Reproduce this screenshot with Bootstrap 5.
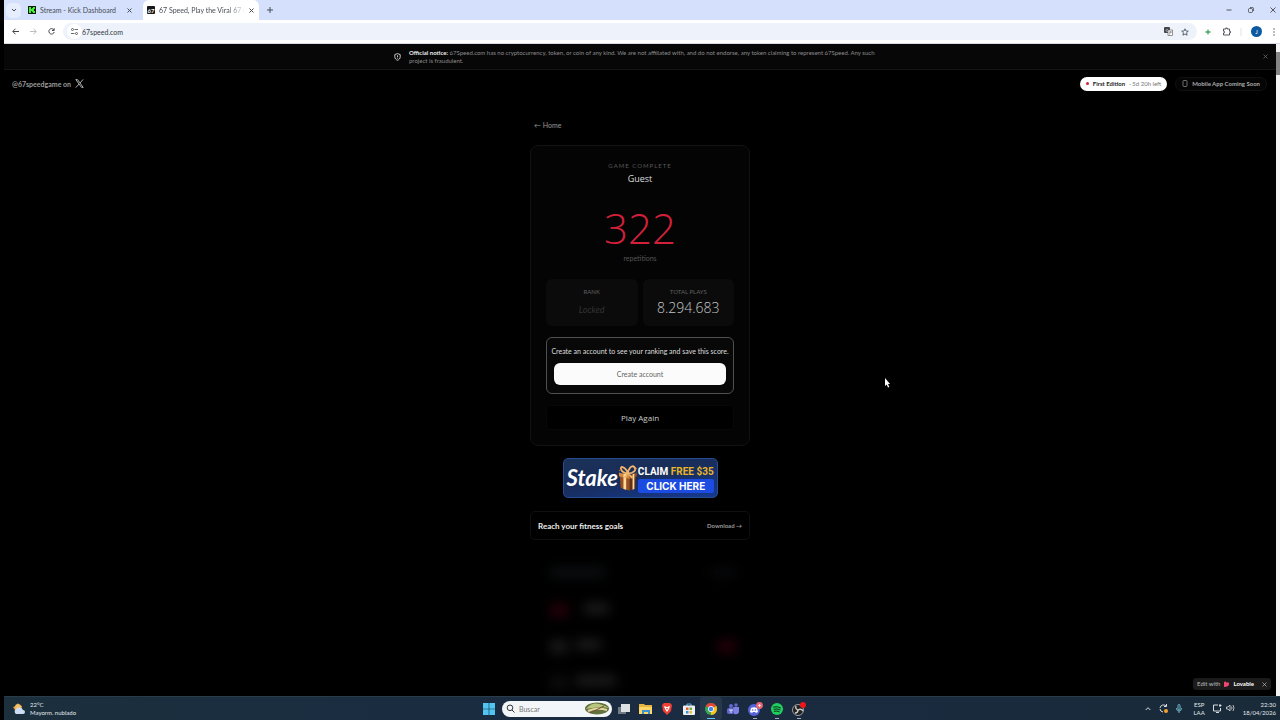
<!DOCTYPE html>
<html lang="es">
<head>
<meta charset="utf-8">
<meta name="viewport" content="width=device-width, initial-scale=1">
<title>67 Speed, Play the Viral 67 Game</title>
<link href="https://cdn.jsdelivr.net/npm/bootstrap@5.3.0/dist/css/bootstrap.min.css" rel="stylesheet">
<style>
body{font-family:Lato,"Open Sans",sans-serif;font-size:8px;line-height:12px;background:#000;color:#ddd}
svg{display:block;flex:none}
button,input{font:inherit}
button.plain{background:none;border:0;padding:0;color:inherit}
a{color:inherit;text-decoration:none}
.screen{height:100vh;padding-left:4px}
.tabstrip{height:20px;background:#d5e1fc;color:#474c55;font-size:7px;padding-left:2px}
.tabsearch{width:15px;height:15px;border-radius:5px;background:#e6eefd!important}
.tab-item{width:116px;height:20px;padding:0 5px 0 7px}
.tab-open{background:#fff;border-radius:6px 6px 0 0;padding:0 5px 0 4px;margin-left:6px}
.tab-label{overflow:hidden;white-space:nowrap}
.tab-fade{-webkit-mask-image:linear-gradient(90deg,#000 80%,transparent)}
.toolbar{height:24px;background:#fff;color:#41464d;border-bottom:1px solid #d8dbe0}
.navbuttons{gap:11px}
.omni{height:17px;border-radius:9px;background:#edf2fb}
.omni input{border:0;background:none;outline:0;padding:0;color:#35393f;font-size:7px;height:14px;min-width:0}
.siteinfo{width:15px;height:15px;border-radius:50%;background:#fff!important}
.avatar{width:11px;height:11px;border-radius:50%;background:#0c5aa0!important;color:#fff!important;font-size:6px}
.notice{height:26px;background:#070707;border-bottom:1px solid #151515;font-size:6px;line-height:8px;color:#8c8c8c}
.notice p{width:472px}
.notice b{color:#eee}
.viewport-area{overflow:hidden;min-height:0}
.track{width:4px;background:#f3f3f3}
.thumb{height:23px;margin-top:8px;background:#868686}
.topline{height:27px;padding:0 9px 0 8px;font-size:7px;color:#9a9a9a;font-weight:700}
.edition{height:14px;border-radius:7px;background:#fff!important;color:#222!important;font-size:6px;padding:0 6px!important;font-weight:700}
.edition span{color:#777;font-weight:400}
.dot{width:3px;height:3px;border-radius:50%;background:#d3203a}
.soon{height:14px;border-radius:7px;border:1px solid #111;background:#050505;color:#aaa;font-size:6px;font-weight:700;padding:0 6px}
.column-main{width:220px}
.homelink{font-size:7px;color:#999;padding:22px 4px 14px;line-height:12px}
.panel{border:1px solid #121212;border-radius:8px;background:#040404;padding:14px 15px 15px;height:301px}
.eyebrow{font-size:6px;line-height:12px;letter-spacing:1px;color:#595959}
.who{font:400 9px/14px "Open Sans",sans-serif;color:#ddd}
.score{font:300 42px/50px "Open Sans",sans-serif;color:#d2203a;margin-top:17px}
.unit{font-size:7px;line-height:10px;color:#555}
.stats{gap:5px;margin-top:16px}
.stat{height:47px;flex:1 1 0;border-radius:6px;background:#0b0b0b;padding-top:7px}
.stat h3{font-size:6px;line-height:12px;color:#606060;margin:0;font-weight:400}
.locked{font-size:9px;line-height:24px;color:#333;font-style:italic}
.total{font:300 14px/20px "Open Sans",sans-serif;color:#c4c4c4}
.signup{border:1px solid #505050;border-radius:6px;height:57px;margin-top:11px;padding:6px 4px;background:#080808;font-size:7px;line-height:14px;white-space:nowrap}
.signup .prompt{margin-bottom:5px}
.signup .button-row{padding:0 3px}
.create{height:22px;border-radius:6px;background:#fbfbfb!important;color:#666!important;width:100%}
.again{height:25px;width:100%;margin-top:11px;background:#000!important;border:1px solid #080808!important;border-radius:4px;color:#ccc!important;font-family:"Open Sans",sans-serif}
.promo{width:155px;height:40px;margin:12px auto 13px;border-radius:5px;border:1px solid #244c8f;background:linear-gradient(170deg,#1b3257,#182d5b 45%,#153992);color:#fff;padding:0 3px}
.promo .brandword{font:italic 700 22px/34px Lato,"Open Sans",sans-serif;width:53px}
.claim{font:700 10px/15px Roboto,sans-serif;white-space:nowrap}
.claim em{font-style:normal;color:#e8b527}
.clickhere{font:700 10px/14px Inter,sans-serif;background:#1b4be0;border-radius:2px;white-space:nowrap}
.goals{height:29px;border:1px solid #101010;border-radius:5px;padding:0 7px;color:#eee;font-weight:700}
.goals small{font-size:6px;color:#999;white-space:nowrap}
.board{margin:28px 14px 0 20px;filter:blur(6px)}
.board-row{height:36px}
.bar{height:9px;background:#202020}
.blob{width:18px;height:13px;background:#1a1a1a}
.red{background:#26000a}
.lovable{position:absolute;right:9px;bottom:6px;height:12px;border-radius:3px;background:#1b1b1b;font-size:6px;color:#bbb;padding:0 4px}
.pointer{position:absolute;left:69%;top:51.2%}
.taskbar{height:24px;background:linear-gradient(90deg,#1b2f3d,#1a2b42 50%,#192a39);border-top:1px solid #2b3c49;color:#e4e8eb;font-size:6px;line-height:8px}
.weather{width:474px}
.search-pill{width:110px;height:16px;border-radius:8px;background:#f3f6f8;overflow:hidden;margin-left:2px}
.search-pill input{border:0;outline:0;background:none;padding:0;width:66px;font-size:7px;color:#555}
.search-pill input::placeholder{color:#777}
.appbtn{width:22px;height:23px;position:relative}
.running::after{content:"";position:absolute;bottom:1px;left:9px;width:4px;height:1px;background:#aab}
.focused{background:#27384c!important;border-radius:3px!important}
.focused::after{left:7px;width:8px;background:#5cc5f2}
</style>
</head>
<body>
<div class="screen d-flex flex-column">
  <header>
    <div class="tabstrip d-flex align-items-center">
      <button class="plain tabsearch d-flex align-items-center justify-content-center" aria-label="Buscar pestañas"><svg width="6" height="6" viewBox="0 0 6 6" fill="none" stroke="currentColor" stroke-width="1"><path d="M1 2l2 2 2-2"/></svg></button>
      <div class="tab-item d-flex align-items-center gap-1">
        <svg width="8" height="8" viewBox="0 0 8 8"><rect width="8" height="8" fill="#101c10"/><path d="M1 1h2v2h1V2h1V1h2v2H6v2h1v2H5V6H4V5H3v2H1z" fill="#3ef12c"/></svg>
        <span class="tab-label flex-grow-1">Stream - Kick Dashboard</span>
        <button class="plain" aria-label="Cerrar"><svg width="5" height="5" viewBox="0 0 5 5" stroke="currentColor"><path d="M.5.5l4 4m0-4l-4 4"/></svg></button>
      </div>
      <div class="tab-item tab-open d-flex align-items-center gap-1">
        <svg width="8" height="8" viewBox="0 0 8 8"><rect width="8" height="8" rx="1" fill="#171717"/><text x="0.5" y="6.500" font-size="6" font-weight="700" fill="#fff">67</text></svg>
        <span class="tab-label tab-fade flex-grow-1">67 Speed, Play the Viral 67 Gam</span>
        <button class="plain" aria-label="Cerrar"><svg width="5" height="5" viewBox="0 0 5 5" stroke="currentColor"><path d="M.5.5l4 4m0-4l-4 4"/></svg></button>
      </div>
      <button class="plain ms-1 ps-1" aria-label="Nueva pestaña"><svg width="6" height="6" viewBox="0 0 6 6" stroke="currentColor"><path d="M3 0v6M0 3h6"/></svg></button>
      <div class="ms-auto d-flex align-items-center gap-3 pe-1">
        <button class="plain" aria-label="Minimizar"><svg width="6" height="6" viewBox="0 0 6 6" stroke="#333" stroke-width=".8"><path d="M.5 3h5"/></svg></button>
        <button class="plain" aria-label="Restaurar"><svg width="6" height="6" viewBox="0 0 6 6" fill="none" stroke="#333" stroke-width=".7"><rect x=".5" y="1.5" width="4" height="4" rx="1"/><path d="M2 .5h2.500a1 1 0 0 1 1 1V4"/></svg></button>
        <button class="plain" aria-label="Cerrar ventana"><svg width="6" height="6" viewBox="0 0 6 6" stroke="#333" stroke-width=".8"><path d="M.5.5l5 5m0-5l-5 5"/></svg></button>
      </div>
    </div>
    <div class="toolbar d-flex align-items-center ps-2 pe-1">
      <div class="navbuttons d-flex me-1">
        <button class="plain" aria-label="Atrás"><svg width="7" height="7" viewBox="0 0 7 7" fill="none" stroke="currentColor"><path d="M7 3.500H1M3.500.7L.8 3.500l2.700 2.800"/></svg></button>
        <button class="plain" aria-label="Adelante"><svg width="7" height="7" viewBox="0 0 7 7" fill="none" stroke="#a8adb4" stroke-width=".8"><path d="M0 3.500h6M3.500.7l2.700 2.800-2.700 2.800"/></svg></button>
        <button class="plain" aria-label="Recargar"><svg width="7" height="7" viewBox="0 0 7 7" fill="none" stroke="currentColor"><path d="M5.800 1.800A2.700 2.700 0 1 0 6.200 4M6.200.3v2.200H4"/></svg></button>
      </div>
      <form class="omni d-flex align-items-center flex-grow-1 pe-2 ms-1 me-2 ps-1">
        <span class="siteinfo d-flex align-items-center justify-content-center"><svg width="7" height="7" viewBox="0 0 7 7" fill="none" stroke="currentColor" stroke-width=".8"><path d="M3.500 1.500H7M0 5.500h3.500"/><circle cx="1.500" cy="1.500" r="1"/><circle cx="5.500" cy="5.500" r="1"/></svg></span>
        <input class="flex-grow-1" type="text" aria-label="Dirección" value="67speed.com">
        <button type="button" class="plain me-2" aria-label="Traducir"><svg width="9" height="9" viewBox="0 0 9 9"><rect width="6" height="6" rx="1" fill="#44484e"/><rect x="4" y="3" width="4.500" height="5.500" fill="#fff" stroke="#666" stroke-width=".7"/><path d="M4 2.500H3a1 1 0 1 0 1 1.300" fill="none" stroke="#ddd" stroke-width=".6"/><path d="M5 5h3M6.500 4.500L5.500 7.500" stroke="#555" stroke-width=".6"/></svg></button>
        <button type="button" class="plain" aria-label="Marcador"><svg width="8" height="8" viewBox="0 0 8 8" fill="none" stroke="currentColor" stroke-width=".8"><path d="M4 .8l1 2.200 2.300.2-1.800 1.600.6 2.400L4 6 1.900 7.200l.6-2.400L.7 3.200 3 3z"/></svg></button>
      </form>
      <div class="d-flex align-items-center gap-2">
        <svg class="me-1" width="6" height="6" viewBox="0 0 6 6" stroke="#43a45c" stroke-width="1.300"><path d="M3 .5v5M.5 3h5"/></svg>
        <svg width="8" height="9" viewBox="0 0 8 9" fill="none" stroke="currentColor" stroke-width=".9"><path d="M.5 2h2.300V1h1.400v1h2.300v2.300h1v1.500h-1V8h-6V6h.8V4.200H.5z"/></svg>
        <svg width="4" height="8" viewBox="0 0 4 8" stroke="#cdd7e6" stroke-width=".7"><path d="M2 0v8"/></svg>
        <button class="plain avatar d-flex align-items-center justify-content-center" aria-label="Perfil">J</button>
        <button class="plain" aria-label="Menú"><svg width="6" height="8" viewBox="0 0 6 8" fill="#444"><circle cx="4" cy="1" r=".7"/><circle cx="4" cy="4" r=".7"/><circle cx="4" cy="7" r=".7"/></svg></button>
      </div>
    </div>
  </header>

  <div class="viewport-area d-flex flex-grow-1 position-relative">
    <main class="flex-grow-1">
      <div class="notice d-flex align-items-center px-2">
        <div class="d-flex align-items-center justify-content-center gap-2 flex-grow-1">
          <svg width="7" height="8" viewBox="0 0 7 8" fill="none" stroke="#ddd" stroke-width=".9"><path d="M3.500.6l2.700 1v2.200c0 1.700-1.100 2.800-2.700 3.500C1.900 6.600.8 5.500.8 3.800V1.600zM3.500 2.300v2M3.500 5v.7"/></svg>
          <p class="m-0"><b>Official notice:</b> 67Speed.com has no cryptocurrency, token, or coin of any kind. We are not affiliated with, and do not endorse, any token claiming to represent 67Speed. Any such project is fraudulent.</p>
        </div>
        <button class="plain" aria-label="Dismiss"><svg width="5" height="5" viewBox="0 0 5 5" stroke="#777" stroke-width=".7"><path d="M.5.5l4 4m0-4l-4 4"/></svg></button>
      </div>
      <div class="topline d-flex align-items-center">
        <a href="#" class="d-flex align-items-center gap-1">@67speedgame on <svg width="9" height="9" viewBox="0 0 9 9" fill="none" stroke="#aaa"><path d="M.8.6h1.700l5.700 7.800H6.500z"/><path d="M8.200.4L5 4M4 5L.8 8.600"/></svg></a>
        <button class="plain edition d-flex align-items-center gap-1 ms-auto me-2">
          <i class="dot"></i>First Edition <span>· 5d 20h left</span></button>
        <div class="soon d-flex align-items-center gap-1"><svg width="6" height="7" viewBox="0 0 6 7" fill="none" stroke="#888" stroke-width=".8"><rect x="1" y=".5" width="4" height="6" rx=".7"/></svg>Mobile App Coming Soon</div>
      </div>
      <div class="column-main mx-auto">
        <div class="homelink"><a href="#">← Home</a></div>
        <section class="panel text-center">
          <div class="eyebrow">GAME COMPLETE</div>
          <div class="who">Guest</div>
          <div class="score">322</div>
          <div class="unit">repetitions</div>
          <div class="stats d-flex">
            <div class="stat"><h3>RANK</h3><div class="locked">Locked</div></div>
            <div class="stat"><h3>TOTAL PLAYS</h3><div class="total">8.294.683</div></div>
          </div>
          <div class="signup">
            <div class="prompt">Create an account to see your ranking and save this score.</div>
            <div class="button-row"><button class="plain create d-block">Create account</button></div>
          </div>
          <button class="plain again">Play Again</button>
        </section>
        <a href="#" class="promo d-flex align-items-center">
          <span class="brandword">Stake</span>
          <svg width="20" height="32" viewBox="1 0 22 32"><path d="M3 13l11 2v15l-10-3z" fill="#97501f"/><path d="M14 15l7-3-1 15-6 3z" fill="#60301b"/><path d="M2 10l12 3v4L2 14z" fill="#d38a43"/><path d="M14 13l8-3v4l-8 3z" fill="#8e4820"/><path d="M7 11l3 1v17l-3-1zM17 12l2-1v17l-2 1z" fill="#ffd995"/><path d="M12 11C3 10 3 3 6 4s5 4 6 7c0-5 4-10 7-7s-1 7-7 7zM12 11l-4 5M12 11l5 5" fill="none" stroke="#f2b76d" stroke-width="2"/><path d="M2 8l3-2M19 7l3-2" stroke="#e77a26"/></svg>
          <span class="flex-grow-1 text-center"><span class="claim d-block">CLAIM <em>FREE $35</em></span><span class="clickhere d-block">CLICK HERE</span></span>
        </a>
        <a href="#" class="goals d-flex align-items-center justify-content-between">Reach your fitness goals<small>Download →</small></a>
        <div class="board" aria-hidden="true">
          <div class="board-row d-flex justify-content-between"><div class="bar" style="width:55px;background:#0d1012"></div><div class="bar" style="width:25px;background:#08090c"></div></div>
          <div class="board-row d-flex"><div class="blob red me-3"></div><div class="bar" style="width:25px"></div></div>
          <div class="board-row d-flex"><div class="blob me-2"></div><div class="bar" style="width:25px"></div><div class="blob red ms-auto"></div></div>
          <div class="board-row d-flex"><div class="blob me-2" style="opacity:.5"></div><div class="bar" style="width:40px"></div></div>
        </div>
      </div>
    </main>
    <div class="track"><div class="thumb"></div></div>
    <div class="lovable d-flex align-items-center gap-1"><span>Edit with</span><svg width="5" height="6" viewBox="0 0 5 6"><path d="M0 1.500a1.300 1.300 0 0 1 2.500 0V2a1.300 1.300 0 0 1 2.500 1.300C5 5 3 6 0 6z" fill="#f14572"/></svg><b class="text-white">Lovable</b><button class="plain ms-1" aria-label="Close"><svg width="5" height="5" viewBox="0 0 5 5" stroke="#bbb" stroke-width=".7"><path d="M.5.5l4 4m0-4l-4 4"/></svg></button></div>
    <svg class="pointer" width="6" height="10" viewBox="0 0 6 10"><path d="M1 0v8l1.700-1.500L4 9.500l1.300-.6L4 6h2z" fill="#fff"/></svg>
  </div>

  <footer class="taskbar d-flex align-items-center">
    <div class="weather d-flex align-items-center gap-1 ps-2">
      <svg width="14" height="14" viewBox="0 0 14 14"><path d="M6 1l1 2 3 1-1 5-6-1-2-3 3-1z" fill="#e5a344"/><circle cx="6" cy="5" r="3" fill="#f4be61"/><path d="M4 12a3 3 0 0 1 0-5 4 4 0 0 1 7 1 2 2 0 0 1 0 4z" fill="#cddcf5"/></svg>
      <div>22°C<br>Mayorm. nublado</div>
    </div>
    <button class="plain appbtn d-flex align-items-center justify-content-center" aria-label="Inicio"><svg width="12" height="12" viewBox="0 0 12 12" fill="#50c5f2"><path d="M0 0h5.700v5.700H0zM6.300 0H12v5.700H6.300zM0 6.300h5.700V12H0zM6.300 6.300H12V12H6.300z"/></svg></button>
    <div class="search-pill d-flex align-items-center ps-1">
      <svg class="me-1" width="9" height="9" viewBox="0 0 9 9" fill="none" stroke="#333"><circle cx="4" cy="3.800" r="2.800"/><path d="M6 6l2.500 2.500"/></svg>
      <input type="text" placeholder="Buscar" aria-label="Buscar">
      <svg width="25" height="13" viewBox="0 0 25 13"><ellipse cx="12" cy="6.500" rx="12" ry="6" fill="#63733f"/><path d="M1 7Q7 0 14 2t10 4Q17 4 1 7z" fill="#b8c67f"/><path d="M3 9q9-4 19-1" stroke="#e3d6a4" stroke-width="2" fill="none"/><path d="M5 11l14-7" stroke="#79502b"/></svg>
    </div>
    <button class="plain appbtn d-flex align-items-center justify-content-center" aria-label="Vista de tareas"><svg width="13" height="12" viewBox="0 0 13 12"><path d="M1 4h8v7H1z" fill="#727a82"/><path d="M4 1h9v8H4z" fill="#dce0e3"/></svg></button>
    <button class="plain appbtn d-flex align-items-center justify-content-center" aria-label="Explorador"><svg width="13" height="12" viewBox="0 0 13 12"><path d="M0 1h5l1 1h7v9H0z" fill="#e8b441"/><path d="M0 4h13v7H0z" fill="#ffd665"/><path d="M3 7h8v4H9V9H5v2H3z" fill="#3c93d0"/></svg></button>
    <button class="plain appbtn d-flex align-items-center justify-content-center" aria-label="Brave"><svg width="10" height="12" viewBox="0 0 10 12"><path d="M2 0h6l2 2-1 6-4 4-4-4-1-6z" fill="#ee4034"/><path d="M2 3l3 1 3-1-1 3-2 3-2-3z" fill="#fff"/><path d="M4 5h2L5 7z" fill="#ee4034"/></svg></button>
    <button class="plain appbtn d-flex align-items-center justify-content-center" aria-label="Tienda"><svg width="12" height="12" viewBox="0 0 12 12"><path d="M4 3V1h4v2" fill="none" stroke="#59b3e2"/><rect y="2.500" width="12" height="9.500" rx="1" fill="#ecf1f4"/><path d="M3 4.500h2.500V7H3z" fill="#ed5a32"/><path d="M6.500 4.500H9V7H6.500z" fill="#70a844"/><path d="M3 8h2.500v2.500H3z" fill="#3695d7"/><path d="M6.500 8H9v2.500H6.500z" fill="#f0b539"/></svg></button>
    <button class="plain appbtn running focused d-flex align-items-center justify-content-center" aria-label="Chrome"><svg width="12" height="12" viewBox="0 0 12 12"><circle cx="6" cy="6" r="6" fill="#35a852"/><path d="M6 6L.8 3A6 6 0 0 1 11.200 3z" fill="#e94335"/><path d="M6 6l5.200-3A6 6 0 0 1 6 12z" fill="#fbc116"/><circle cx="6" cy="6" r="2.900" fill="#fff"/><circle cx="6" cy="6" r="2.200" fill="#4285f4"/></svg></button>
    <button class="plain appbtn d-flex align-items-center justify-content-center" aria-label="Teams"><svg width="12" height="12" viewBox="0 0 12 12" fill="#6268cc"><circle cx="4" cy="3" r="2"/><circle cx="9" cy="2" r="1.700"/><rect y="5" width="7" height="6" rx="2"/><path d="M6 4h6v4q0 4-5 3z" fill="#7c82e1"/><path d="M2 7h4M4 7v3" stroke="#fff" stroke-width=".8"/></svg></button>
    <button class="plain appbtn running d-flex align-items-center justify-content-center" aria-label="Discord"><svg width="15" height="14" viewBox="0 0 15 14"><circle cx="6" cy="8" r="6" fill="#5562dd"/><path d="M3 6q3-1.500 6 0l1 4-2 1-1-1H5l-1 1-2-1z" fill="#fff"/><circle cx="4.700" cy="8" r=".8" fill="#5562dd"/><circle cx="7.300" cy="8" r=".8" fill="#5562dd"/><circle cx="11.500" cy="3.500" r="3.400" fill="#e76872"/><path d="M10 3.500h3M11.500 2v3" stroke="#fff" stroke-width=".7"/></svg></button>
    <button class="plain appbtn running d-flex align-items-center justify-content-center" aria-label="Spotify"><svg width="12" height="12" viewBox="0 0 12 12"><circle cx="6" cy="6" r="6" fill="#20cf5d"/><path d="M2.500 4q4-1 7 .8M3 6.200q3-1 6 .6M3.300 8.200q2.500-.7 4.800.5" fill="none" stroke="#102d1b" stroke-linecap="round"/></svg></button>
    <button class="plain appbtn running d-flex align-items-center justify-content-center" aria-label="OBS"><svg width="14" height="14" viewBox="0 0 14 14"><circle cx="6" cy="8" r="5.500" fill="#222" stroke="#bbb" stroke-width=".8"/><path d="M6 8Q3 7 4 4M6 8q0 3-3 3M6 8q3-2 5 1" fill="none" stroke="#ccc" stroke-width="1.400"/><circle cx="11" cy="3" r="3" fill="#ec151c"/></svg></button>
    <div class="ms-auto d-flex align-items-center gap-2 pe-1 text-end">
      <svg width="6" height="6" viewBox="0 0 6 6" fill="none" stroke="#ddd"><path d="M.7 4L3 1.700 5.300 4"/></svg>
      <svg width="9" height="9" viewBox="0 0 9 9" fill="none" stroke="#ddd"><path d="M1 4a3.500 3.500 0 0 1 6-2M7.500 0v2.500H5M1 5a3.500 3.500 0 0 0 3 3"/><circle cx="7" cy="7" r="2" fill="#f3a12c" stroke="none"/></svg>
      <svg class="me-1" width="6" height="9" viewBox="0 0 6 9" fill="none" stroke="#7ac6dd" stroke-width=".9"><rect x="2" y=".5" width="2" height="5" rx="1"/><path d="M.5 4q0 3 2.500 3t2.500-3M3 7v2"/></svg>
      <div class="text-center">ESP<br>LAA</div>
      <div class="d-flex gap-1"><svg width="9" height="9" viewBox="0 0 9 9" fill="none" stroke="#eee" stroke-width=".9"><path d="M5 1H.5v6h7V4M3 8.500h3M7 0v3M6 1.500h2.500"/></svg>
      <svg width="9" height="8" viewBox="0 0 9 8" fill="none" stroke="#ddd" stroke-width=".8"><path d="M.5 3H2l2-2v6L2 5H.5zM5.500 2.500q1 1.500 0 3M7 1q2 3 0 6"/></svg></div>
      <div>22:30<br>18/04/2026</div>
    </div>
  </footer>
</div>
<script src="https://cdn.jsdelivr.net/npm/bootstrap@5.3.0/dist/js/bootstrap.bundle.min.js"></script>
</body>
</html>
